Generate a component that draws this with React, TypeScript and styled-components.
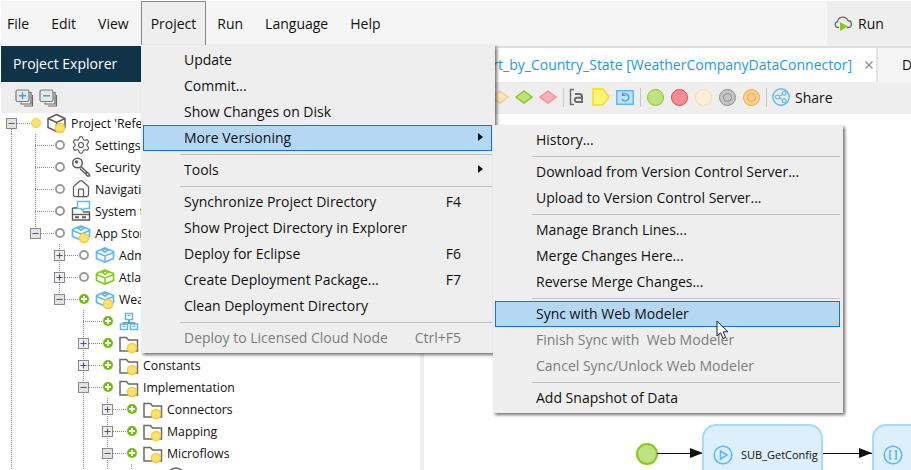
import React from "react";
import styled, { createGlobalStyle } from "styled-components";
import { Settings, House } from "lucide-react";

const GlobalStyle = createGlobalStyle`
  html, body {
    margin: 0;
    padding: 0;
    background: #fff;
    font-family: "Open Sans", "Noto Sans", sans-serif;
    font-size: 14px;
    color: #111;
  }
`;

const colorMenu = "#eeeeee";
const colorBar = "#f5f5f5";
const colorGuide = "#8a8a8a";
const colorBlue = "#5db9f7";
const colorGreen = "#84cc16";

const dotV = `repeating-linear-gradient(to bottom, ${colorGuide} 0 1px, transparent 1px 2px)`;
const dotH = `repeating-linear-gradient(to right, ${colorGuide} 0 1px, transparent 1px 2px)`;

const Root = styled.div`
  position: relative;
  width: 911px;
  height: 470px;
  box-sizing: border-box;
  padding: 1px 0 0 1px;
  overflow: hidden;
  background: #fff;
  display: flex;
  flex-direction: column;
`;

const MenuBar = styled.div`
  height: 45px;
  flex: none;
  background: ${colorBar};
  display: flex;
  align-items: stretch;
`;

const MenuTab = styled.div<{ $open?: boolean }>`
  box-sizing: border-box;
  padding: 0 ${(p) => (p.$open ? 9 : 10)}px 2px;
  display: flex;
  align-items: center;
  margin-left: ${(p) => (p.$open ? 1 : 0)}px;
  border: 1px solid ${(p) => (p.$open ? "#8a8a8a" : "transparent")};
  border-bottom: 0;
  background: ${(p) => (p.$open ? colorMenu : "transparent")};

  &:first-child {
    padding-left: 5px;
  }
`;

const RunButton = styled.div`
  margin-left: auto;
  width: 84px;
  box-sizing: border-box;
  padding: 0 0 1px 7px;
  background: ${colorMenu};
  display: flex;
  align-items: center;
  gap: 5px;
`;

const Workspace = styled.div`
  flex: 1;
  min-height: 0;
  display: flex;
`;

const Sidebar = styled.div`
  width: 419px;
  flex: none;
  display: flex;
  flex-direction: column;
`;

const SidebarTitle = styled.div`
  height: 36px;
  flex: none;
  box-sizing: border-box;
  padding: 0 0 2px 12px;
  background: #0f3449;
  color: #fff;
  display: flex;
  align-items: center;
`;

const SidebarTools = styled.div`
  height: 31px;
  flex: none;
  box-sizing: border-box;
  padding-left: 14px;
  background: ${colorMenu};
  display: flex;
  align-items: center;
  gap: 5px;
`;

const Tree = styled.div`
  margin: -1px 0 0 -1px;
  display: flex;
  flex-direction: column;
  font-size: 12.3px;
`;

const TreeRow = styled.div<{ $covered: boolean }>`
  width: ${(p) => (p.$covered ? "141px" : "auto")};
  height: 22px;
  flex: none;
  display: flex;
  align-items: center;
  overflow: hidden;
  white-space: nowrap;
`;

const Guide = styled.div<{ $on: boolean }>`
  width: 24px;
  height: 100%;
  flex: none;
  background: ${(p) => (p.$on ? dotV : "none")} 11px 0 / 1px 100% no-repeat;
`;

const Branch = styled.div<{ $line: "full" | "top" | "bottom" }>`
  width: 31px;
  height: 100%;
  flex: none;
  display: flex;
  align-items: center;
  background-image: ${dotV}, ${dotH};
  background-repeat: no-repeat;
  background-size: 1px ${(p) => (p.$line === "full" ? "100%" : "50%")}, 20px 1px;
  background-position: 11px ${(p) => (p.$line === "bottom" ? "100%" : "0")}, 11px 50%;
`;

const ExpandBox = styled.svg`
  display: block;
  margin-left: 6px;
`;

const StatusDot = styled.span<{ $kind: "grey" | "yellow" | "green" }>`
  width: 10px;
  height: 10px;
  flex: none;
  box-sizing: border-box;
  border-radius: 50%;
  border: ${(p) =>
    p.$kind === "grey" ? "2px solid #9a9a9a" : p.$kind === "yellow" ? "1px solid #f7c93e" : "0"};
  background: ${(p) =>
    p.$kind === "grey"
      ? "#fff"
      : p.$kind === "yellow"
        ? "#ffe36a"
        : "linear-gradient(#fff, #fff) center / 6px 2px no-repeat, linear-gradient(#fff, #fff) center / 2px 6px no-repeat, #6fbf0a"};
`;

const IconCell = styled.span`
  width: 20px;
  height: 22px;
  flex: none;
  margin: 0 4px 0 6px;
  display: flex;
  align-items: center;
  justify-content: center;
  color: #5c5c5c;
`;

const Splitter = styled.div`
  width: 4px;
  flex: none;
  background: ${colorMenu};
`;

const MainPane = styled.div`
  flex: 1;
  min-width: 0;
  display: flex;
  flex-direction: column;
`;

const TabStrip = styled.div`
  height: 36px;
  flex: none;
  box-sizing: border-box;
  border-top: 2px solid #dedede;
  background: ${colorBar};
  display: flex;
`;

const ActiveTab = styled.div`
  width: 454px;
  flex: none;
  box-sizing: border-box;
  padding-bottom: 2px;
  background: #fff;
  color: #1b9be6;
  display: flex;
  align-items: center;
  justify-content: flex-end;
  overflow: hidden;
  white-space: nowrap;
  border-right: 2px solid #e2e2e2;
`;

const TabClose = styled.svg`
  flex: none;
  margin: 1px 2px 0 12px;
`;

const IdleTab = styled.div`
  padding: 0 0 2px 24px;
  display: flex;
  align-items: center;
`;

const EditorTools = styled.div`
  height: 32px;
  flex: none;
  box-sizing: border-box;
  padding: 0 0 2px 64px;
  background: ${colorMenu};
  display: flex;
  align-items: center;
`;

const ToolCell = styled.span<{ $w?: number }>`
  width: ${(p) => p.$w ?? 24}px;
  flex: none;
  display: flex;
  align-items: center;
  justify-content: center;
`;

const ToolSep = styled.span<{ $r?: number }>`
  width: 1px;
  height: 19px;
  flex: none;
  margin: 0 ${(p) => p.$r ?? 3}px 0 3px;
  background: #c8c8c8;
`;

const ToolCircle = styled.span<{ $fill: string; $edge: string; $ring?: boolean }>`
  width: 17px;
  height: 17px;
  box-sizing: border-box;
  border-radius: 50%;
  border: 1.5px solid ${(p) => p.$edge};
  background: ${(p) => p.$fill};
  display: flex;
  align-items: center;
  justify-content: center;

  &::after {
    content: "";
    display: ${(p) => (p.$ring ? "block" : "none")};
    width: 9px;
    height: 9px;
    box-sizing: border-box;
    border-radius: 50%;
    border: 1.5px solid ${(p) => p.$edge};
  }
`;

const ShareLabel = styled.span`
  margin-left: 3px;
`;

const Canvas = styled.div`
  position: relative;
  flex: 1;
  background: #fff;
`;

const StartEvent = styled.div`
  position: absolute;
  left: 212px;
  top: 329px;
  width: 22px;
  height: 22px;
  box-sizing: border-box;
  border-radius: 50%;
  border: 2px solid ${colorGreen};
  background: #bde281;
`;

const FlowArrow = styled.div<{ $x: number; $w: number }>`
  position: absolute;
  left: ${(p) => p.$x}px;
  top: 339px;
  width: ${(p) => p.$w}px;
  height: 1px;
  background: #111;

  &::after {
    content: "";
    position: absolute;
    right: 0;
    top: -5px;
    border-left: 13px solid #111;
    border-top: 5.5px solid transparent;
    border-bottom: 5.5px solid transparent;
  }
`;

const FlowNode = styled.div<{ $x: number; $w: number }>`
  position: absolute;
  left: ${(p) => p.$x}px;
  top: 310px;
  width: ${(p) => p.$w}px;
  height: 100px;
  box-sizing: border-box;
  padding: 19px 0 0 9px;
  border: 2px solid #a8daf9;
  border-radius: 14px;
  background: #dceffb;
  display: flex;
  align-items: flex-start;
  gap: 8px;
  font-size: 11px;
  line-height: 19px;
  white-space: nowrap;
`;

const Menu = styled.div<{ $x: number; $y: number; $w: number }>`
  position: absolute;
  left: ${(p) => p.$x}px;
  top: ${(p) => p.$y}px;
  width: ${(p) => p.$w}px;
  box-sizing: border-box;
  padding: 2px 3px 2px 2px;
  background: ${colorMenu};
  box-shadow: 2px 2px 3px rgba(0, 0, 0, 0.55);
`;

const MenuItem = styled.div<{ $active?: boolean; $disabled?: boolean }>`
  height: 26px;
  box-sizing: border-box;
  padding: 0 8px 2px 40px;
  display: flex;
  align-items: center;
  white-space: pre;
  border: 1px solid ${(p) => (p.$active ? "#0a78d4" : "transparent")};
  background: ${(p) => (p.$active ? "#b6d7f3" : "transparent")};
  color: ${(p) => (p.$disabled ? "#7d7d7d" : "#111")};
`;

const Shortcut = styled.span`
  margin-left: auto;
`;

const ArrowSlot = styled.span<{ $show: boolean }>`
  width: 0;
  height: 0;
  flex: none;
  margin-left: 17px;
  border-left: 5px solid ${(p) => (p.$show ? "#111" : "transparent")};
  border-top: 4.5px solid transparent;
  border-bottom: 4.5px solid transparent;
`;

const MenuSep = styled.div`
  height: 6px;
  margin-left: 37px;
  display: flex;
  align-items: center;

  &::after {
    content: "";
    flex: 1;
    height: 1px;
    background: #c2c2c2;
  }
`;

const Pointer = styled.svg`
  position: absolute;
  left: 716px;
  top: 320px;
`;

type IconKind =
  | "project"
  | "gear"
  | "key"
  | "home"
  | "texts"
  | "module"
  | "moduleGreen"
  | "domain"
  | "folder"
  | "flow";

const Badge = () => <circle cx="13" cy="16" r="4.6" fill="#ffe36a" stroke="#f7c93e" />;

const TreeIcon: React.FC<{ kind: IconKind; badge?: boolean }> = ({ kind, badge }) => {
  if (kind === "gear") return <Settings size={20} strokeWidth={1.4} />;
  if (kind === "home") return <House size={20} strokeWidth={1.5} />;
  const blue = kind === "module" || kind === "domain";
  const stroke = blue ? colorBlue : kind === "moduleGreen" ? colorGreen : "#5c5c5c";
  return (
    <svg width="20" height="22" viewBox="0 0 20 22" fill="none" stroke={stroke} strokeWidth="1.5">
      {kind === "project" && (
        <path d="M9.5 2.5 18 6.5V15.5L9.5 19.5 1 15.5V6.5ZM1 6.5 9.5 10.5 18 6.5M9.5 10.5V19.5" />
      )}
      {(kind === "module" || kind === "moduleGreen") && (
        <>
          <path d="M10 4 18.5 7.5V14.5L10 18 1.5 14.5V7.5Z" strokeWidth="1.7" />
          <path d="M1.5 8.5 10 12 18.5 8.5M10 12V18M7 6.2 10 5l3 1.2L10 8.4Z" strokeWidth="1.5" />
        </>
      )}
      {kind === "key" && (
        <>
          <circle cx="6.5" cy="7" r="4.8" />
          <circle cx="5.5" cy="6" r="1" />
          <path d="M10 10.5 18.5 18.5V20H16.5L15 18.5V17H13.5L9 12.5" />
        </>
      )}
      {kind === "texts" && (
        <>
          <path d="M6.5 1.5H18.5V8.5H13.5L11.5 10.5 10 8.5H6.5Z" stroke={colorBlue} />
          <path d="M1.5 8V20H18.5V12H12M1.5 8H6" strokeWidth="1.4" />
          <path d="M1.5 14.5H18.5" strokeWidth="1.4" />
          <path d="M4 17.2H8M11 17.2H15" strokeWidth="2" />
        </>
      )}
      {kind === "domain" && (
        <>
          <path d="M10 9V13M4.5 15V13H15.5V15" stroke="#3f7fb8" />
          <rect x="6.5" y="3.5" width="7" height="6" />
          <rect x="1.5" y="14" width="7" height="5.5" />
          <rect x="11.5" y="14" width="7" height="5.5" />
          <path d="M8.5 5.5h3M3.5 16.5h3M13.5 16.5h3" strokeWidth="1.2" />
        </>
      )}
      {kind === "folder" && <path d="M1 19V5.5H7.5L9.5 8H18.5V19Z" stroke="#6a6a6a" strokeWidth="1.5" />}
      {kind === "flow" && <circle cx="9" cy="12" r="8" />}
      {badge && <Badge />}
    </svg>
  );
};

const Expander: React.FC<{ open: boolean; blue?: boolean }> = ({ open, blue }) => (
  <ExpandBox width="11" height="11" viewBox="0 0 11 11">
    <rect x="0.5" y="0.5" width="10" height="10" fill={open ? "#e2e2e2" : "#eeeeee"} stroke="#8a8a8a" />
    <path d={open ? "M2.5 5.5H8.5" : "M2.5 5.5H8.5M5.5 2.5V8.5"} stroke={blue ? "#2f5fb0" : "#3d5a8f"} />
  </ExpandBox>
);

interface Node {
  level: number;
  guides?: number[];
  expand?: "plus" | "minus";
  line?: "full" | "top" | "bottom";
  status: "grey" | "yellow" | "green";
  icon: IconKind;
  badge?: boolean;
  label?: string;
  covered?: boolean;
}

const nodes: Node[] = [
  { level: 0, expand: "minus", line: "bottom", status: "yellow", icon: "project", badge: true, label: "Project 'Reference'", covered: true },
  { level: 1, guides: [0], status: "grey", icon: "gear", label: "Settings", covered: true },
  { level: 1, guides: [0], status: "grey", icon: "key", label: "Security", covered: true },
  { level: 1, guides: [0], status: "grey", icon: "home", label: "Navigation", covered: true },
  { level: 1, guides: [0], status: "grey", icon: "texts", label: "System texts", covered: true },
  { level: 1, guides: [0], expand: "minus", line: "top", status: "grey", icon: "module", badge: true, label: "App Store modules", covered: true },
  { level: 2, guides: [0], expand: "plus", status: "grey", icon: "module", label: "Administration", covered: true },
  { level: 2, guides: [0], expand: "plus", status: "grey", icon: "moduleGreen", label: "Atlas_UI_Resources", covered: true },
  { level: 2, guides: [0], expand: "minus", line: "top", status: "green", icon: "module", badge: true, label: "WeatherCompanyDataConnector", covered: true },
  { level: 3, guides: [0], status: "green", icon: "domain", covered: true },
  { level: 3, guides: [0], expand: "plus", status: "green", icon: "folder", badge: true, covered: true },
  { level: 3, guides: [0], expand: "plus", status: "green", icon: "folder", badge: true, label: "Constants" },
  { level: 3, guides: [0], expand: "minus", status: "green", icon: "folder", badge: true, label: "Implementation" },
  { level: 4, guides: [0, 3], expand: "plus", status: "green", icon: "folder", badge: true, label: "Connectors" },
  { level: 4, guides: [0, 3], expand: "plus", status: "green", icon: "folder", badge: true, label: "Mapping" },
  { level: 4, guides: [0, 3], expand: "minus", status: "green", icon: "folder", badge: true, label: "Microflows" },
  { level: 5, guides: [0, 3, 4], status: "green", icon: "flow" },
];

type Entry = { sep: true } | { label: string; key?: string; sub?: boolean; active?: boolean; disabled?: boolean };

const projectMenu: Entry[] = [
  { label: "Update" },
  { label: "Commit..." },
  { label: "Show Changes on Disk" },
  { label: "More Versioning", sub: true, active: true },
  { sep: true },
  { label: "Tools", sub: true },
  { sep: true },
  { label: "Synchronize Project Directory", key: "F4" },
  { label: "Show Project Directory in Explorer" },
  { label: "Deploy for Eclipse", key: "F6" },
  { label: "Create Deployment Package...", key: "F7" },
  { label: "Clean Deployment Directory" },
  { sep: true },
  { label: "Deploy to Licensed Cloud Node", key: "Ctrl+F5", disabled: true },
];

const versionMenu: Entry[] = [
  { label: "History..." },
  { sep: true },
  { label: "Download from Version Control Server..." },
  { label: "Upload to Version Control Server..." },
  { sep: true },
  { label: "Manage Branch Lines..." },
  { label: "Merge Changes Here..." },
  { label: "Reverse Merge Changes..." },
  { sep: true },
  { label: "Sync with Web Modeler", active: true },
  { label: "Finish Sync with  Web Modeler", disabled: true },
  { label: "Cancel Sync/Unlock Web Modeler", disabled: true },
  { sep: true },
  { label: "Add Snapshot of Data" },
];

const MenuEntries: React.FC<{ entries: Entry[] }> = ({ entries }) => (
  <>
    {entries.map((e, i) =>
      "sep" in e ? (
        <MenuSep key={i} />
      ) : (
        <MenuItem key={i} $active={e.active} $disabled={e.disabled}>
          {e.label}
          {(e.key || e.sub) && <Shortcut>{e.key}</Shortcut>}
          {(e.key || e.sub) && <ArrowSlot $show={!!e.sub} />}
        </MenuItem>
      )
    )}
  </>
);

const StackIcon: React.FC<{ minus?: boolean }> = ({ minus }) => (
  <svg width="19" height="18" viewBox="0 0 19 18" fill="none">
    <path d="M14.5 3.5H16V15H6V13.5M17.5 6V17H9" stroke="#6a6a6a" strokeWidth="1.2" />
    <rect x="1" y="1" width="13" height="11.5" rx="1.5" fill="#e6e6e6" stroke="#7a7a7a" strokeWidth="1.2" />
    <path d={minus ? "M4 6.8H11" : "M4 6.8H11M7.5 3.5V10"} stroke="#2ca3ee" strokeWidth="1.4" />
  </svg>
);

const Diamond: React.FC<{ fill: string; edge: string }> = ({ fill, edge }) => (
  <svg width="18" height="14" viewBox="0 0 18 14">
    <path d="M9 1 17 7 9 13 1 7Z" fill={fill} stroke={edge} strokeWidth="1.4" />
  </svg>
);

const App: React.FC = () => (
  <Root>
    <GlobalStyle />
    <MenuBar>
      <MenuTab>File</MenuTab>
      <MenuTab>Edit</MenuTab>
      <MenuTab>View</MenuTab>
      <MenuTab $open>Project</MenuTab>
      <MenuTab>Run</MenuTab>
      <MenuTab>Language</MenuTab>
      <MenuTab>Help</MenuTab>
      <RunButton>
        <svg width="19" height="18" viewBox="0 0 19 18" fill="none">
          <path
            d="M5 13.5H4A3 3 0 0 1 3.5 7.6 5.5 5.5 0 0 1 14 6.5 3.6 3.6 0 0 1 15 13.5H13"
            stroke="#6a6a6a"
            strokeWidth="1.3"
          />
          <path d="M6 8V17L14 12.5Z" fill={colorGreen} />
        </svg>
        Run
      </RunButton>
    </MenuBar>

    <Workspace>
      <Sidebar>
        <SidebarTitle>Project Explorer</SidebarTitle>
        <SidebarTools>
          <StackIcon />
          <StackIcon minus />
        </SidebarTools>
        <Tree>
          {nodes.map((n, row) => (
            <TreeRow key={row} $covered={!!n.covered}>
              {Array.from({ length: n.level }, (_, i) => (
                <Guide key={i} $on={!!n.guides?.includes(i)} />
              ))}
              <Branch $line={n.line ?? "full"}>
                {n.expand && <Expander open={n.expand === "minus"} blue={n.level === 0} />}
              </Branch>
              <StatusDot $kind={n.status} />
              <IconCell>
                <TreeIcon kind={n.icon} badge={n.badge} />
              </IconCell>
              {n.label}
            </TreeRow>
          ))}
        </Tree>
      </Sidebar>
      <Splitter />
      <MainPane>
        <TabStrip>
          <ActiveTab>
            Report_by_Country_State [WeatherCompanyDataConnector]
            <TabClose width="10" height="10" viewBox="0 0 10 10">
              <path d="M1.5 1.5 8.5 8.5M8.5 1.5 1.5 8.5" stroke="#8a8a8a" strokeWidth="1.2" />
            </TabClose>
          </ActiveTab>
          <IdleTab>Domain</IdleTab>
        </TabStrip>
        <EditorTools>
          <ToolCell><Diamond fill="#ffe6bf" edge="#fcc98a" /></ToolCell>
          <ToolCell><Diamond fill="#bde281" edge={colorGreen} /></ToolCell>
          <ToolCell><Diamond fill="#ffb3b8" edge="#f98c95" /></ToolCell>
          <ToolSep />
          <ToolCell $w={18}>
            <svg width="15" height="18" viewBox="0 0 15 18" fill="none">
              <path d="M5 1.5H1.5V16.5H5" stroke="#6a6a6a" strokeWidth="1.5" />
              <path d="M6 6H10.5Q13 6 13 8.5V14H8Q5.8 14 5.8 11.8 5.8 9.8 8 9.8H13" stroke="#6a6a6a" strokeWidth="1.9" />
            </svg>
          </ToolCell>
          <ToolCell $w={4} />
          <ToolCell>
            <svg width="18" height="18" viewBox="0 0 18 18">
              <path d="M1 1H11L17 9 11 17H1Z" fill="#fdf56e" stroke="#f5dc2e" strokeWidth="1.5" />
            </svg>
          </ToolCell>
          <ToolCell>
            <svg width="18" height="15" viewBox="0 0 18 15" fill="none">
              <rect x="0.75" y="0.75" width="16.5" height="13.5" fill="#bfe2fb" stroke={colorBlue} strokeWidth="1.5" />
              <path d="M6.5 5A3.6 3.6 0 1 1 6 9M6.5 2.5V5.5H9.5" stroke="#2c9be8" strokeWidth="1.2" />
            </svg>
          </ToolCell>
          <ToolSep $r={2} />
          <ToolCell><ToolCircle $fill="#bde281" $edge={colorGreen} /></ToolCell>
          <ToolCell><ToolCircle $fill="#f98c95" $edge="#ef3e4a" /></ToolCell>
          <ToolCell><ToolCircle $fill="#ffeed8" $edge="#fcd9a8" /></ToolCell>
          <ToolCell><ToolCircle $fill="#c4c4c4" $edge="#8c8c8c" $ring /></ToolCell>
          <ToolCell><ToolCircle $fill="#fcd08c" $edge="#f3a73c" $ring /></ToolCell>
          <ToolSep />
          <ToolCell $w={22}>
            <svg width="18" height="18" viewBox="0 0 18 18" fill="none" stroke={colorBlue}>
              <circle cx="9" cy="9" r="8.2" strokeWidth="1.4" />
              <path d="M6 9 12 5.5M6 9 12 12.5" strokeWidth="1.2" />
              <circle cx="5.5" cy="9" r="1.9" strokeWidth="1.2" fill="#fff" />
              <circle cx="12.2" cy="5.3" r="1.9" strokeWidth="1.2" fill="#fff" />
              <circle cx="12.2" cy="12.7" r="1.9" strokeWidth="1.2" fill="#fff" />
            </svg>
          </ToolCell>
          <ShareLabel>Share</ShareLabel>
        </EditorTools>
        <Canvas>
          <StartEvent />
          <FlowArrow $x={233} $w={46} />
          <FlowNode $x={278} $w={121}>
            <svg width="20" height="20" viewBox="0 0 20 20" fill="none" stroke={colorBlue} strokeWidth="1.6">
              <circle cx="10" cy="10" r="8.8" />
              <path d="M7.5 6 14 10 7.5 14Z" />
            </svg>
            SUB_GetConfig
          </FlowNode>
          <FlowArrow $x={399} $w={49} />
          <FlowNode $x={448} $w={121}>
            <svg width="20" height="20" viewBox="0 0 20 20" fill="none" stroke={colorBlue} strokeWidth="1.6">
              <circle cx="10" cy="10" r="8.8" />
              <path d="M8.5 6H6.8V14H8.5M11.5 6H13.2V14H11.5" />
            </svg>
          </FlowNode>
        </Canvas>
      </MainPane>
    </Workspace>

    <Menu $x={141} $y={45} $w={354}>
      <MenuEntries entries={projectMenu} />
    </Menu>
    <Menu $x={493} $y={125} $w={350}>
      <MenuEntries entries={versionMenu} />
    </Menu>
    <Pointer width="13" height="20" viewBox="0 0 13 20">
      <path d="M1 1V16L4.6 12.8 7 18.5 9.6 17.4 7.2 11.8H12Z" fill="#fff" stroke="#222" strokeWidth="1" />
    </Pointer>
  </Root>
);

export default App;
